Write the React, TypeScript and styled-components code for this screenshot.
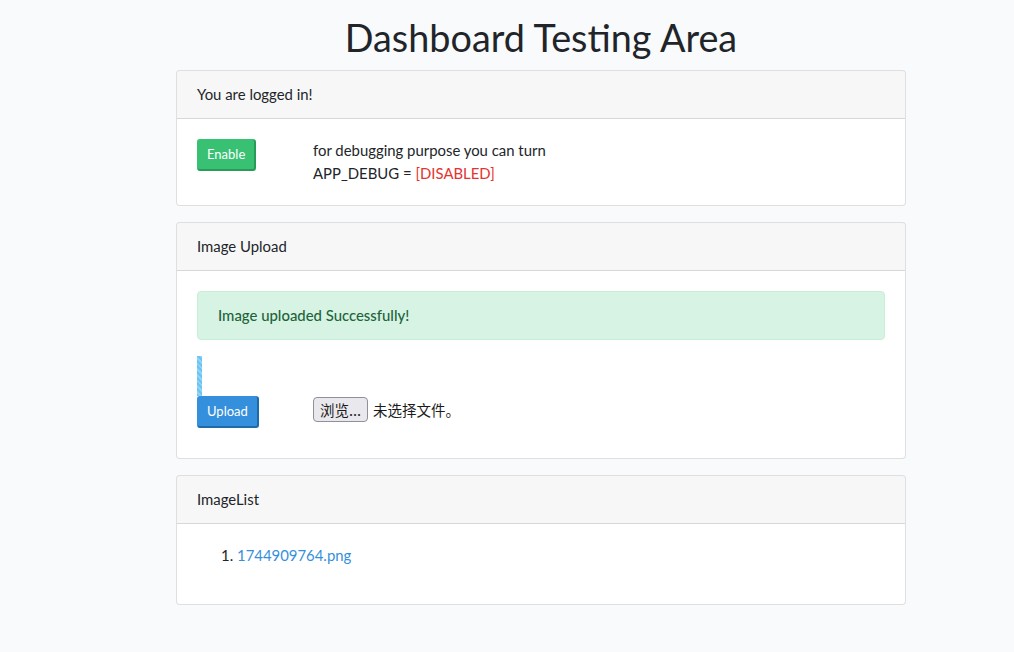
import React from "react";
import styled, { createGlobalStyle } from "styled-components";

const Global = createGlobalStyle`
  html, body { margin: 0; padding: 0; }
  body {
    background: #f8fafc;
    font-family: "Lato", "Noto Sans", "Noto Sans CJK SC", sans-serif;
    font-size: 14.9px;
    line-height: 1.6;
    color: #212529;
  }
  * { box-sizing: border-box; }
`;

const Page = styled.div`
  padding-left: 68px;
`;

const Container = styled.div`
  width: 730px;
  margin: 0 auto;
  display: flex;
  flex-direction: column;
  gap: 16px;
  padding-bottom: 40px;
`;

const Title = styled.h1`
  margin: 15px 0 -6px;
  font-size: 37.8px;
  font-weight: 400;
  line-height: 45px;
  height: 45px;
  text-align: center;
  color: #212529;
`;

const Card = styled.section`
  background: #fff;
  border: 1px solid rgba(0, 0, 0, 0.125);
  border-radius: 4px;
  overflow: hidden;
`;

const CardHeader = styled.div`
  background: rgba(0, 0, 0, 0.03);
  border-bottom: 1px solid rgba(0, 0, 0, 0.125);
  padding: 12px 20px;
  line-height: 23px;
`;

const CardBody = styled.div<{ $pb?: number }>`
  padding: 20px 20px ${(p) => p.$pb ?? 20}px;
`;

const Row = styled.div`
  display: grid;
  grid-template-columns: 116px 1fr;
  align-items: start;
`;

const Btn = styled.button<{ $bg: string; $dark: string }>`
  font-family: inherit;
  font-size: 13px;
  line-height: 19px;
  color: #fff;
  background: ${(p) => p.$bg};
  border: 1px solid ${(p) => p.$bg};
  border-right: 2px solid ${(p) => p.$dark};
  border-bottom: 2px solid ${(p) => p.$dark};
  border-radius: 3px;
  padding: 5px 9px 5px 9px;
  cursor: pointer;
  justify-self: start;
`;

const Text = styled.div`
  line-height: 23px;
`;

const Red = styled.span`
  color: #e3342f;
`;

const Alert = styled.div`
  background: #d7f3e3;
  border: 1px solid #c7eed8;
  color: #1d643b;
  border-radius: 4px;
  padding: 12px 20px;
  line-height: 23px;
  font-weight: 500;
  margin-bottom: 16px;
`;

const Progress = styled.div`
  width: 5px;
  height: 40px;
  background: repeating-linear-gradient(
    45deg,
    #6cc4f2 0 2px,
    #8fd3f7 2px 4px
  );
`;

const FileWrap = styled.div`
  display: flex;
  align-items: center;
  gap: 5px;
  padding-top: 1px;
  font-family: "Noto Sans CJK SC", "Noto Sans", sans-serif;
  font-size: 14.5px;
  color: #1b1b1b;
`;

const FileBtn = styled.span`
  display: inline-block;
  background: #e9e9ed;
  border: 1px solid #8f8f9d;
  border-radius: 4px;
  padding: 0 6px;
  line-height: 23px;
  height: 25px;
`;

const List = styled.ol`
  margin: 0 0 17px;
  padding-left: 40px;
  line-height: 23px;
`;

const Link = styled.a`
  color: #3490dc;
  text-decoration: none;
`;

export default function App() {
  return (
    <>
      <Global />
      <Page>
        <Container>
          <Title>Dashboard Testing Area</Title>
          <Card>
            <CardHeader>You are logged in!</CardHeader>
            <CardBody>
              <Row>
                <Btn $bg="#38c172" $dark="#2a9a59">Enable</Btn>
                <Text>
                  for debugging purpose you can turn
                  <br />
                  APP_DEBUG = <Red>[DISABLED]</Red>
                </Text>
              </Row>
            </CardBody>
          </Card>
          <Card>
            <CardHeader>Image Upload</CardHeader>
            <CardBody $pb={30}>
              <Alert>Image uploaded Successfully!</Alert>
              <Progress />
              <Row>
                <Btn $bg="#3490dc" $dark="#1f6aa8">Upload</Btn>
                <FileWrap>
                  <FileBtn>浏览...</FileBtn>
                  <span>未选择文件。</span>
                </FileWrap>
              </Row>
            </CardBody>
          </Card>
          <Card>
            <CardHeader>ImageList</CardHeader>
            <CardBody>
              <List>
                <li>
                  <Link href="#">1744909764.png</Link>
                </li>
              </List>
            </CardBody>
          </Card>
        </Container>
      </Page>
    </>
  );
}
